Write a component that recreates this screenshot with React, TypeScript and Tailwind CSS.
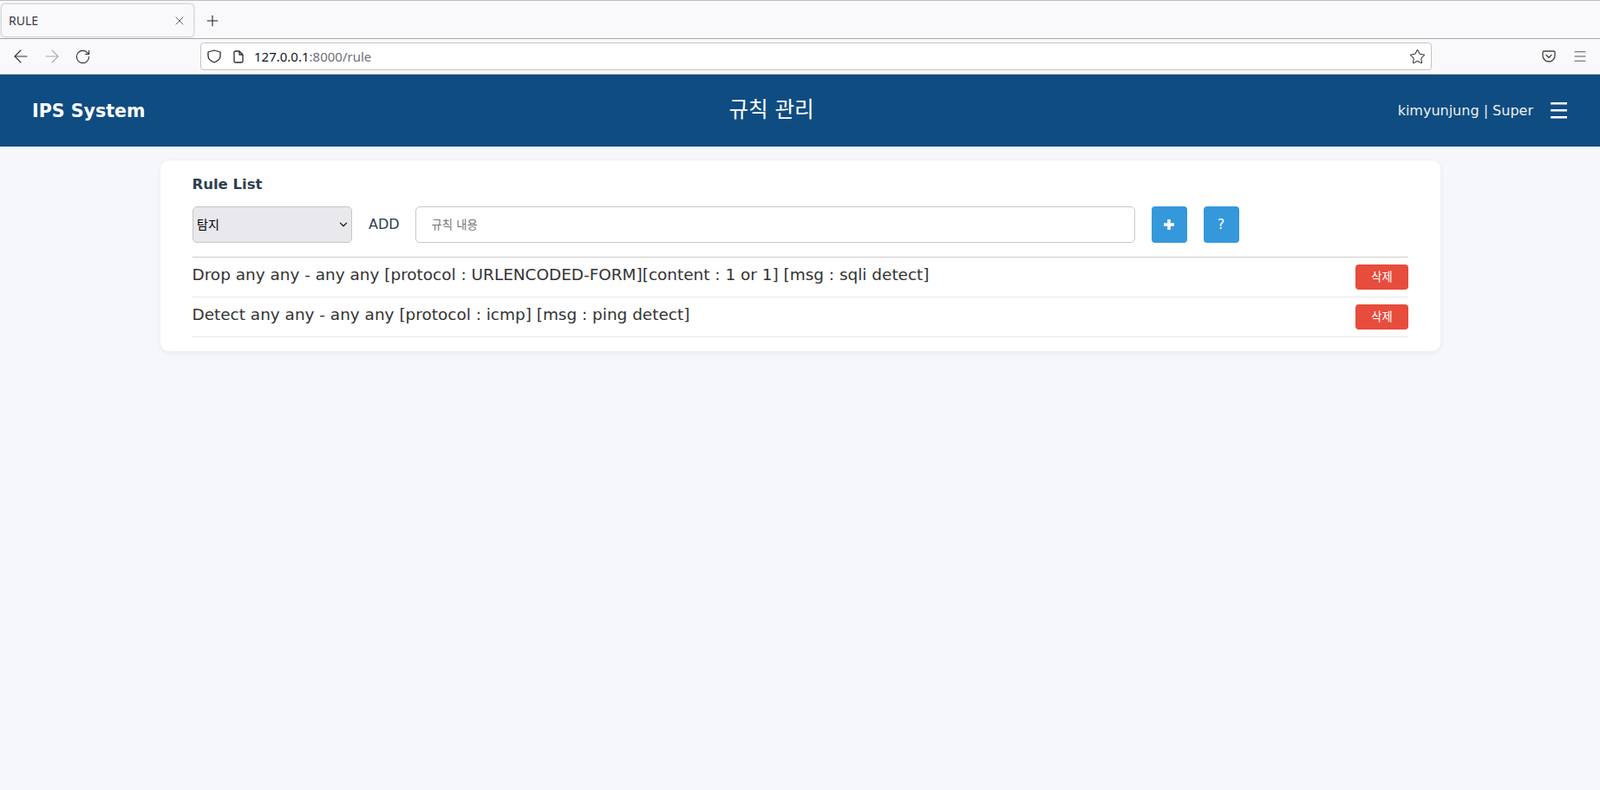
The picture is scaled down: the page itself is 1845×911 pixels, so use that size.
import { Plus, X, ArrowLeft, ArrowRight, RotateCw, Star, Menu, ChevronDown } from "lucide-react";

const pageFont = "font-['DejaVu_Sans','Noto_Sans_CJK_KR',sans-serif]";
const chromeFont = "font-['Noto_Sans','Noto_Sans_CJK_KR',sans-serif]";

const rules = [
  "Drop any any - any any [protocol : URLENCODED-FORM][content : 1 or 1] [msg : sqli detect]",
  "Detect any any - any any [protocol : icmp] [msg : ping detect]",
];

function BrowserBar() {
  return (
    <div className={chromeFont}>
      {/* tabs */}
      <div className="h-[45px] bg-[#f9f9fb] border-t border-t-[#bdbdbd] border-b border-b-[#a8a8a8] flex items-start pl-[2px] pt-[4px]">
        <div className="h-[37px] w-[221px] bg-[#f9f9fb] rounded-[4px] shadow-[0_0_3px_rgba(0,0,0,0.4)] flex items-center justify-between pl-[8px] pr-[8px]">
          <span className="text-[14px] text-[#3a3a42]">RULE</span>
          <X size={16} strokeWidth={1.2} className="text-[#444]" />
        </div>
        <Plus size={20} strokeWidth={1.3} className="text-[#222] ml-[12px] mt-[9px]" />
      </div>
      {/* url bar */}
      <div className="h-[41px] bg-[#f9f9fb] border-b border-b-[#c8c8cc] flex items-center">
        <ArrowLeft size={24} strokeWidth={1.1} className="text-[#333] ml-[12px]" />
        <ArrowRight size={24} strokeWidth={1.1} className="text-[#aaa] ml-[12px]" />
        <RotateCw size={19} strokeWidth={1.4} className="text-[#333] ml-[14px]" />
        <div className="ml-[126px] h-[32px] w-[1420px] bg-white border border-[#c4c4c4] rounded-[4px] flex items-center pl-[7px] pr-[6px]">
          <svg width="16" height="16" viewBox="0 0 16 16" fill="none" stroke="#2b2a33" strokeWidth="1.3">
            <path d="M8 1 15 3v4.500c0 3.600-3 6-7 7.500-4-1.500-7-3.900-7-7.500V3z" strokeLinejoin="round" />
          </svg>
          <svg width="14" height="15" viewBox="0 0 14 15" fill="none" stroke="#2b2a33" strokeWidth="1.3" className="ml-[13px]">
            <path d="M2 2.500a1.500 1.500 0 0 1 1.500-1.500H8l4 4v7.500a1.500 1.500 0 0 1-1.500 1.500h-7A1.500 1.500 0 0 1 2 12.500z M8 1v4h4" strokeLinejoin="round" />
          </svg>
          <span className="ml-[11px] text-[15px] text-[#15141a]">
            127.0.0.1<span className="text-[#6f6f78]">:8000/rule</span>
          </span>
          <Star size={19} strokeWidth={1.3} className="text-[#333] ml-auto" />
        </div>
        <svg width="16" height="16" viewBox="0 0 16 16" fill="none" stroke="#444" strokeWidth="1.3" className="ml-[127px]">
          <path d="M2.500 2h11A1.500 1.500 0 0 1 15 3.500V7a7 7 0 0 1-14 0V3.500A1.500 1.500 0 0 1 2.500 2z" />
          <path d="M5 6.500 8 9.500l3-3" strokeLinecap="round" strokeLinejoin="round" />
        </svg>
        <Menu size={18} strokeWidth={1.2} className="text-[#444] ml-[19px]" />
      </div>
    </div>
  );
}

export default function App() {
  return (
    <div className={`min-h-[911px] bg-[#f5f7fb] ${pageFont}`}>
      <BrowserBar />

      <header className="h-[83px] bg-[#0f4c81] text-white flex items-center justify-between pl-[37px] pr-[38px]">
        <h1 className="text-[20.6px] font-bold pt-[2px]">IPS System</h1>
        <h2 className="text-[24.6px]">규칙 관리</h2>
        <div className="flex items-center">
          <span className="text-[16px] text-[#ecf0f1]">kimyunjung | Super</span>
          <svg width="19" height="19" viewBox="0 0 19 19" fill="#fff" className="ml-[20px]">
            <rect y="0" width="19" height="2.500" />
            <rect y="8" width="19" height="2.500" />
            <rect y="16" width="19" height="2.500" />
          </svg>
        </div>
      </header>

      <main className="pt-[16px]">
        <section className="w-[1476px] ml-[185px] h-[220px] bg-white rounded-[10px] shadow-[0_2px_6px_rgba(0,0,0,0.06)] px-[37px] pt-[18px]">
          <h3 className="text-[16.5px] font-bold text-[#2c3e50] leading-[19px] -ml-[0.5px]">Rule List</h3>

          <div className="flex items-center mt-[16px] pb-[16px] border-b border-b-[#cccccc]">
            <div className="relative w-[184px] h-[42px]">
              <select className="appearance-none w-full h-full bg-[#e9e8ed] border border-[#c6c6c6] rounded-[5px] text-[14px] text-black pl-[4px]">
                <option>탐지</option>
              </select>
              <ChevronDown size={14} strokeWidth={2.2} className="absolute right-[3px] top-[14px] text-[#222] pointer-events-none" />
            </div>
            <span className="ml-[19px] text-[16px] text-[#2c3e50]">ADD</span>
            <input
              placeholder="규칙 내용"
              className="ml-[18px] w-[830px] h-[42px] border border-[#c9c9c9] rounded-[5px] px-[18px] text-[13.33px] placeholder:text-[#757575] outline-none"
            />
            <button className="ml-[19px] w-[41px] h-[42px] bg-[#3498db] rounded-[4px] flex items-center justify-center">
              <svg width="12" height="12" viewBox="0 0 12 12" fill="#fff">
                <path d="M4.200 0h3.600v4.200H12v3.600H7.800V12H4.200V7.800H0V4.200h4.200z" />
              </svg>
            </button>
            <button className="ml-[19px] w-[41px] h-[42px] bg-[#3498db] rounded-[4px] text-white text-[16px]">?</button>
          </div>

          {rules.map((rule) => (
            <div key={rule} className="h-[46px] flex items-start justify-between border-b border-b-[#e8e8e8]">
              <span className="text-[18.45px] text-[#333] leading-[21px] mt-[9px] -ml-[0.5px]">{rule}</span>
              <button className="mt-[8px] w-[61px] h-[29px] bg-[#e74c3c] rounded-[4px] text-white text-[13.33px]">삭제</button>
            </div>
          ))}
        </section>
      </main>
    </div>
  );
}
